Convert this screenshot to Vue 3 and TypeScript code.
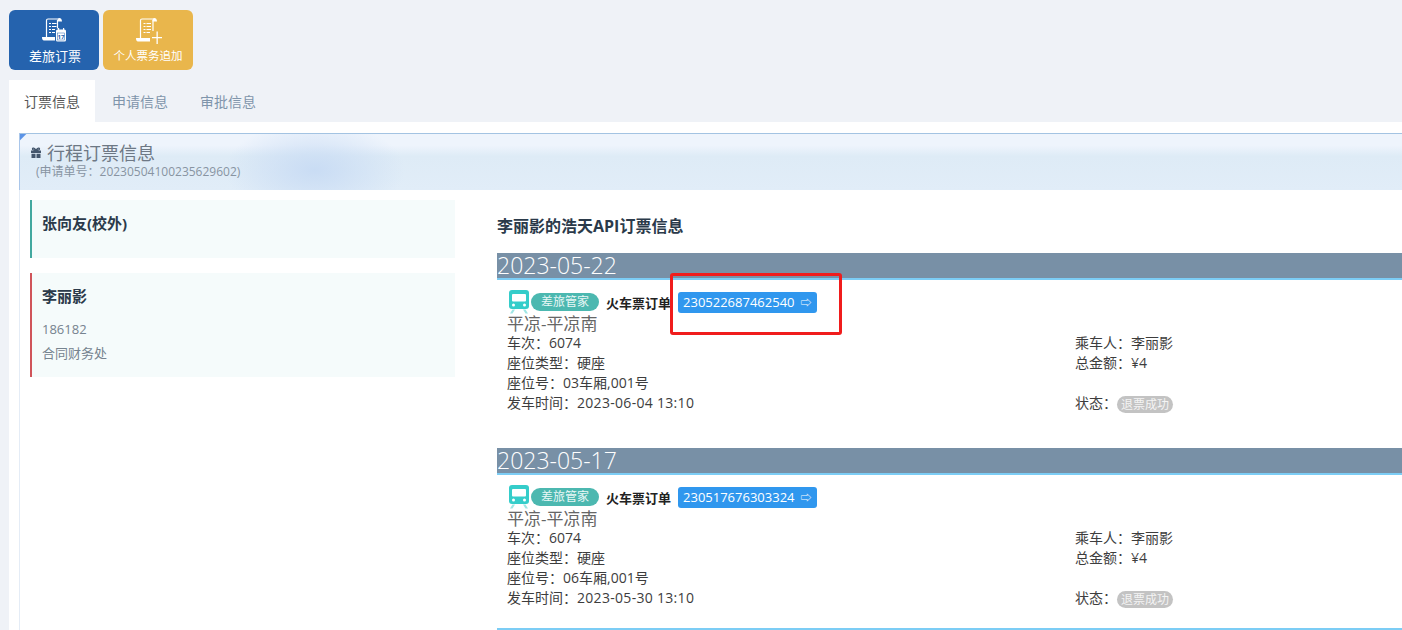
<template>
  <div class="page">
    <div class="toolbar">
      <a class="quick blue">
        <svg class="quick-icon" width="24" height="25" viewBox="0 0 24 25">
          <path d="M4.500 19V2.500c0-1 .5-1.500 1.500-1.500h11.500M15.500 2v8.500" fill="none" stroke="#fff" stroke-width="1.200" />
          <path d="M15.500 2.500c0-1.500 1-2.500 2-2.500s2.500 1 2.500 3.500h-4.500z" fill="#fff" />
          <path d="M7 5h2v1H7zM10 5h4.500v1H10zM7 8h2v1H7zM10 8h4.500v1H10zM7 11h2v1H7zM10 11h3v1h-3zM7 14h2v1H7zM10 14h3v1h-3z" fill="#fff" />
          <path d="M0 19h13v3.500H2c-1.500 0-2-1.500-2-3.500z" fill="#fff" />
          <rect x="14" y="11.500" width="10" height="12" rx="1.500" fill="#fff" />
          <rect x="16" y="10" width="1.200" height="3" fill="#fff" />
          <rect x="21" y="10" width="1.200" height="3" fill="#fff" />
          <rect x="15.500" y="15" width="7" height="7" fill="#fff" stroke="#2563ae" stroke-width=".5" />
          <text x="19" y="21" text-anchor="middle" class="cal-day">17</text>
        </svg>
        <span class="quick-text">差旅订票</span>
      </a>
      <a class="quick yellow">
        <svg class="quick-icon shifted" width="26" height="27" viewBox="0 0 26 27">
          <path d="M4.500 20V2.500c0-1 .5-1.500 1.500-1.500h12.500M17 2v11" fill="none" stroke="#fff" stroke-width="1.200" />
          <path d="M16.500 2.500c0-1.500 1-2.500 2-2.500s2.500 1 2.500 3.500h-4.500z" fill="#fff" />
          <path d="M7.500 5h2v1h-2zM10.500 5H15v1h-4.500zM7.500 8h2v1h-2zM10.500 8H15v1h-4.500zM7.500 11h2v1h-2zM10.500 11H15v1h-4.500zM7.500 14h2v1h-2zM10.500 14H14v1h-3.500z" fill="#fff" />
          <path d="M0 20h14v3.500H2c-1.500 0-2-1.500-2-3.500z" fill="#fff" />
          <path d="M20.500 13.500h1.300V19H26v1.300h-4.200V26h-1.300v-5.700H16V19h4.500z" fill="#fff" />
        </svg>
        <span class="quick-text small">个人票务追加</span>
      </a>
    </div>

    <div class="tabs">
      <div v-for="(tab, i) in tabs" :key="tab" :class="['tab', { active: i === 0 }]">{{ tab }}</div>
    </div>

    <div class="panel">
      <div class="box">
        <div class="box-head">
          <div class="box-title">
            <svg width="12" height="12" viewBox="0 0 12 12">
              <path d="M1 3.500h10v2.500H1zM1.500 6.800h4v4.200h-4zM6.500 6.800h4v4.200h-4z" fill="#44566c" />
              <path d="M6 3.500C4.500.5 2.200.6 2.500 2.200 2.700 3.200 4.500 3.500 6 3.500c1.500 0 3.300-.3 3.500-1.300C9.800.6 7.500.5 6 3.500z" fill="none" stroke="#44566c" stroke-width="1.200" />
            </svg>
            <span>行程订票信息</span>
          </div>
          <div class="box-sub">(申请单号：20230504100235629602)</div>
        </div>

        <div class="box-body">
          <div class="people">
            <div class="person green">
              <h4>张向友(校外)</h4>
            </div>
            <div class="person red">
              <h4>李丽影</h4>
              <p>186182</p>
              <p>合同财务处</p>
            </div>
          </div>

          <div class="orders">
            <h3 class="orders-title">李丽影的浩天API订票信息</h3>
            <div v-for="order in orders" :key="order.no" class="order">
              <div class="order-date">{{ order.date }}</div>
              <div class="order-head">
                <svg class="train" width="22" height="24" viewBox="0 0 22 24">
                  <path d="M4 0h14c2 0 3 1 3 3v13c0 2-1 3-3 3H4c-2 0-3-1-3-3V3c0-2 1-3 3-3z" fill="#35cdca" />
                  <rect x="4" y="4" width="14" height="7.500" rx="1" fill="#fff" />
                  <circle cx="5.500" cy="15" r="1.500" fill="#fff" />
                  <circle cx="16.500" cy="15" r="1.500" fill="#fff" />
                  <path d="M4.500 19.500H7L4.500 23.500H2zM15 19.500h2.500l2.500 4h-2.500z" fill="#9fe6e4" />
                </svg>
                <span class="source">差旅管家</span>
                <b class="kind">火车票订单</b>
                <span class="order-no">{{ order.no }}<i>⇨</i></span>
              </div>
              <div class="route">平凉-平凉南</div>
              <div class="details">
                <div>车次：6074</div>
                <div>乘车人：李丽影</div>
                <div>座位类型：硬座</div>
                <div>总金额：¥4</div>
                <div>座位号：{{ order.seat }}</div>
                <div></div>
                <div>发车时间：<span class="time">{{ order.time }}</span></div>
                <div>状态：<span class="status">退票成功</span></div>
              </div>
            </div>
            <div class="orders-end"></div>
          </div>
        </div>
      </div>
    </div>

    <div class="mark"></div>
  </div>
</template>

<script setup lang="ts">
const tabs = ["订票信息", "申请信息", "审批信息"];

const orders = [
  { date: "2023-05-22", no: "230522687462540", seat: "03车厢,001号", time: "2023-06-04 13:10" },
  { date: "2023-05-17", no: "230517676303324", seat: "06车厢,001号", time: "2023-05-30 13:10" },
];
</script>

<style>
html,
body {
  margin: 0;
  overflow: hidden;
}
</style>

<style scoped>
.page {
  position: relative;
  height: 630px;
  overflow: hidden;
  background: #eff2f7;
  padding-left: 9px;
  font-family: "Open Sans", "Noto Sans CJK SC", sans-serif;
  font-size: 14px;
  color: #393939;
}

.toolbar {
  display: flex;
  gap: 4px;
  padding-top: 10px;
  height: 70px;
}

.quick {
  width: 90px;
  height: 60px;
  border-radius: 6px;
  color: #fff;
  display: flex;
  flex-direction: column;
  align-items: center;
}

.quick.blue {
  background: #2563ae;
}

.quick.yellow {
  background: #e9b64c;
}

.quick-icon {
  margin-top: 8px;
  flex: none;
}

.quick-icon.shifted {
  margin-left: 2px;
}

.cal-day {
  font-size: 6px;
  font-weight: 700;
  fill: #2563ae;
}

.quick-text {
  font-size: 13px;
  line-height: 20px;
  margin: 3px 0 0 2px;
}

.quick-text.small {
  font-size: 11.5px;
  margin: 1px 0 0;
}

.tabs {
  display: flex;
  height: 42px;
}

.tab {
  padding: 0 16px;
  line-height: 43px;
  color: #7f95ab;
}

.tab.active {
  padding: 0 15px;
  background: #fff;
  color: #555;
  margin-right: 1px;
}

.panel {
  background: #fff;
  height: 508px;
  padding: 11px 0 0 10px;
  box-sizing: border-box;
}

.box {
  border-left: 1px solid #e4ecf6;
  height: 100%;
  position: relative;
}

.box-head {
  height: 56px;
  border-top: 1px solid #a3c3e2;
  box-shadow: -1px 0 0 #a9c6ea;
  background:
    linear-gradient(135deg, #5b93e6 0, #5b93e6 4px, rgba(91, 147, 230, 0) 5px) no-repeat 0 0 / 12px 12px,
    radial-gradient(ellipse 90px 48px at 295px 36px, #c9dcf4 0%, rgba(201, 220, 244, 0) 100%),
    linear-gradient(180deg, #eef4fc 0%, #eef4fc 20%, #deebf6 40%, #e1edf8 100%);
  padding-left: 10px;
}

.box-title {
  display: flex;
  align-items: center;
  gap: 5px;
  color: #6d7885;
  font-size: 18px;
  line-height: 22px;
  padding-top: 8px;
}

.box-sub {
  font-size: 12px;
  line-height: 14px;
  color: #8894a2;
  margin: 1px 0 0 6px;
}

.box-body {
  display: flex;
}

.people {
  width: 425px;
  margin: 10px 0 0 10px;
}

.person {
  background: #f5fbfb;
  padding: 11px 0 0 10px;
  margin-bottom: 15px;
  box-sizing: border-box;
  width: 425px;
}

.person.green {
  border-left: 2px solid #42a89f;
  height: 58px;
}

.person.red {
  border-left: 2px solid #d0545a;
  height: 104px;
}

.person h4 {
  margin: 0 0 9px;
  font-size: 15px;
  line-height: 24px;
  font-weight: 700;
  color: #2b3a4a;
}

.person p {
  margin: 0;
  font-size: 13px;
  line-height: 24px;
  color: #76838f;
}

.orders {
  flex: 1;
  margin-left: 42px;
  min-width: 0;
}

.orders-title {
  margin: 24px 0 15px;
  font-size: 16px;
  line-height: 24px;
  font-weight: 700;
  color: #2b3a4a;
}

.order {
  height: 195px;
}

.order-date {
  height: 25px;
  background: #7890a6;
  border-bottom: 2px solid #7ccdf5;
  color: #fff;
  font-size: 23px;
  font-weight: 300;
  line-height: 25px;
}

.order-head {
  display: flex;
  align-items: center;
  height: 26px;
  padding: 9px 0 0 11px;
}

.train {
  margin-right: 1px;
}

.source {
  background: #4cb8b0;
  color: #e9f7f6;
  border-radius: 10px;
  width: 68px;
  text-align: center;
  font-size: 12px;
  line-height: 18px;
}

.kind {
  margin-left: 7px;
  font-size: 13px;
  color: #222;
}

.order-no {
  margin-left: 7px;
  background: #3097ee;
  color: #fff;
  border-radius: 3px;
  line-height: 21px;
  height: 21px;
  padding: 0 5px;
  font-size: 13px;
  white-space: nowrap;
}

.order-no i {
  font-style: normal;
  font-size: 11px;
  margin-left: 6px;
}

.route {
  margin: -1px 0 -1px 10px;
  font-size: 17px;
  line-height: 20px;
  color: #666;
}

.details {
  margin-left: 10px;
  display: grid;
  grid-template-columns: 568px 1fr;
  grid-auto-rows: 20px;
  line-height: 20px;
  color: #3d3d3d;
}

.time {
  letter-spacing: 0.3px;
}

.status {
  display: inline-block;
  background: #c3c3c3;
  color: #f4f4f4;
  border-radius: 9px;
  padding: 0 4px;
  font-size: 12px;
  line-height: 17px;
  vertical-align: -1px;
}

.orders-end {
  height: 2px;
  background: #7ccdf5;
  margin-top: -15px;
}

.mark {
  position: absolute;
  left: 670px;
  top: 273px;
  width: 172px;
  height: 62px;
  box-sizing: border-box;
  border: 3px solid #f01c1c;
  border-radius: 3px;
}
</style>
